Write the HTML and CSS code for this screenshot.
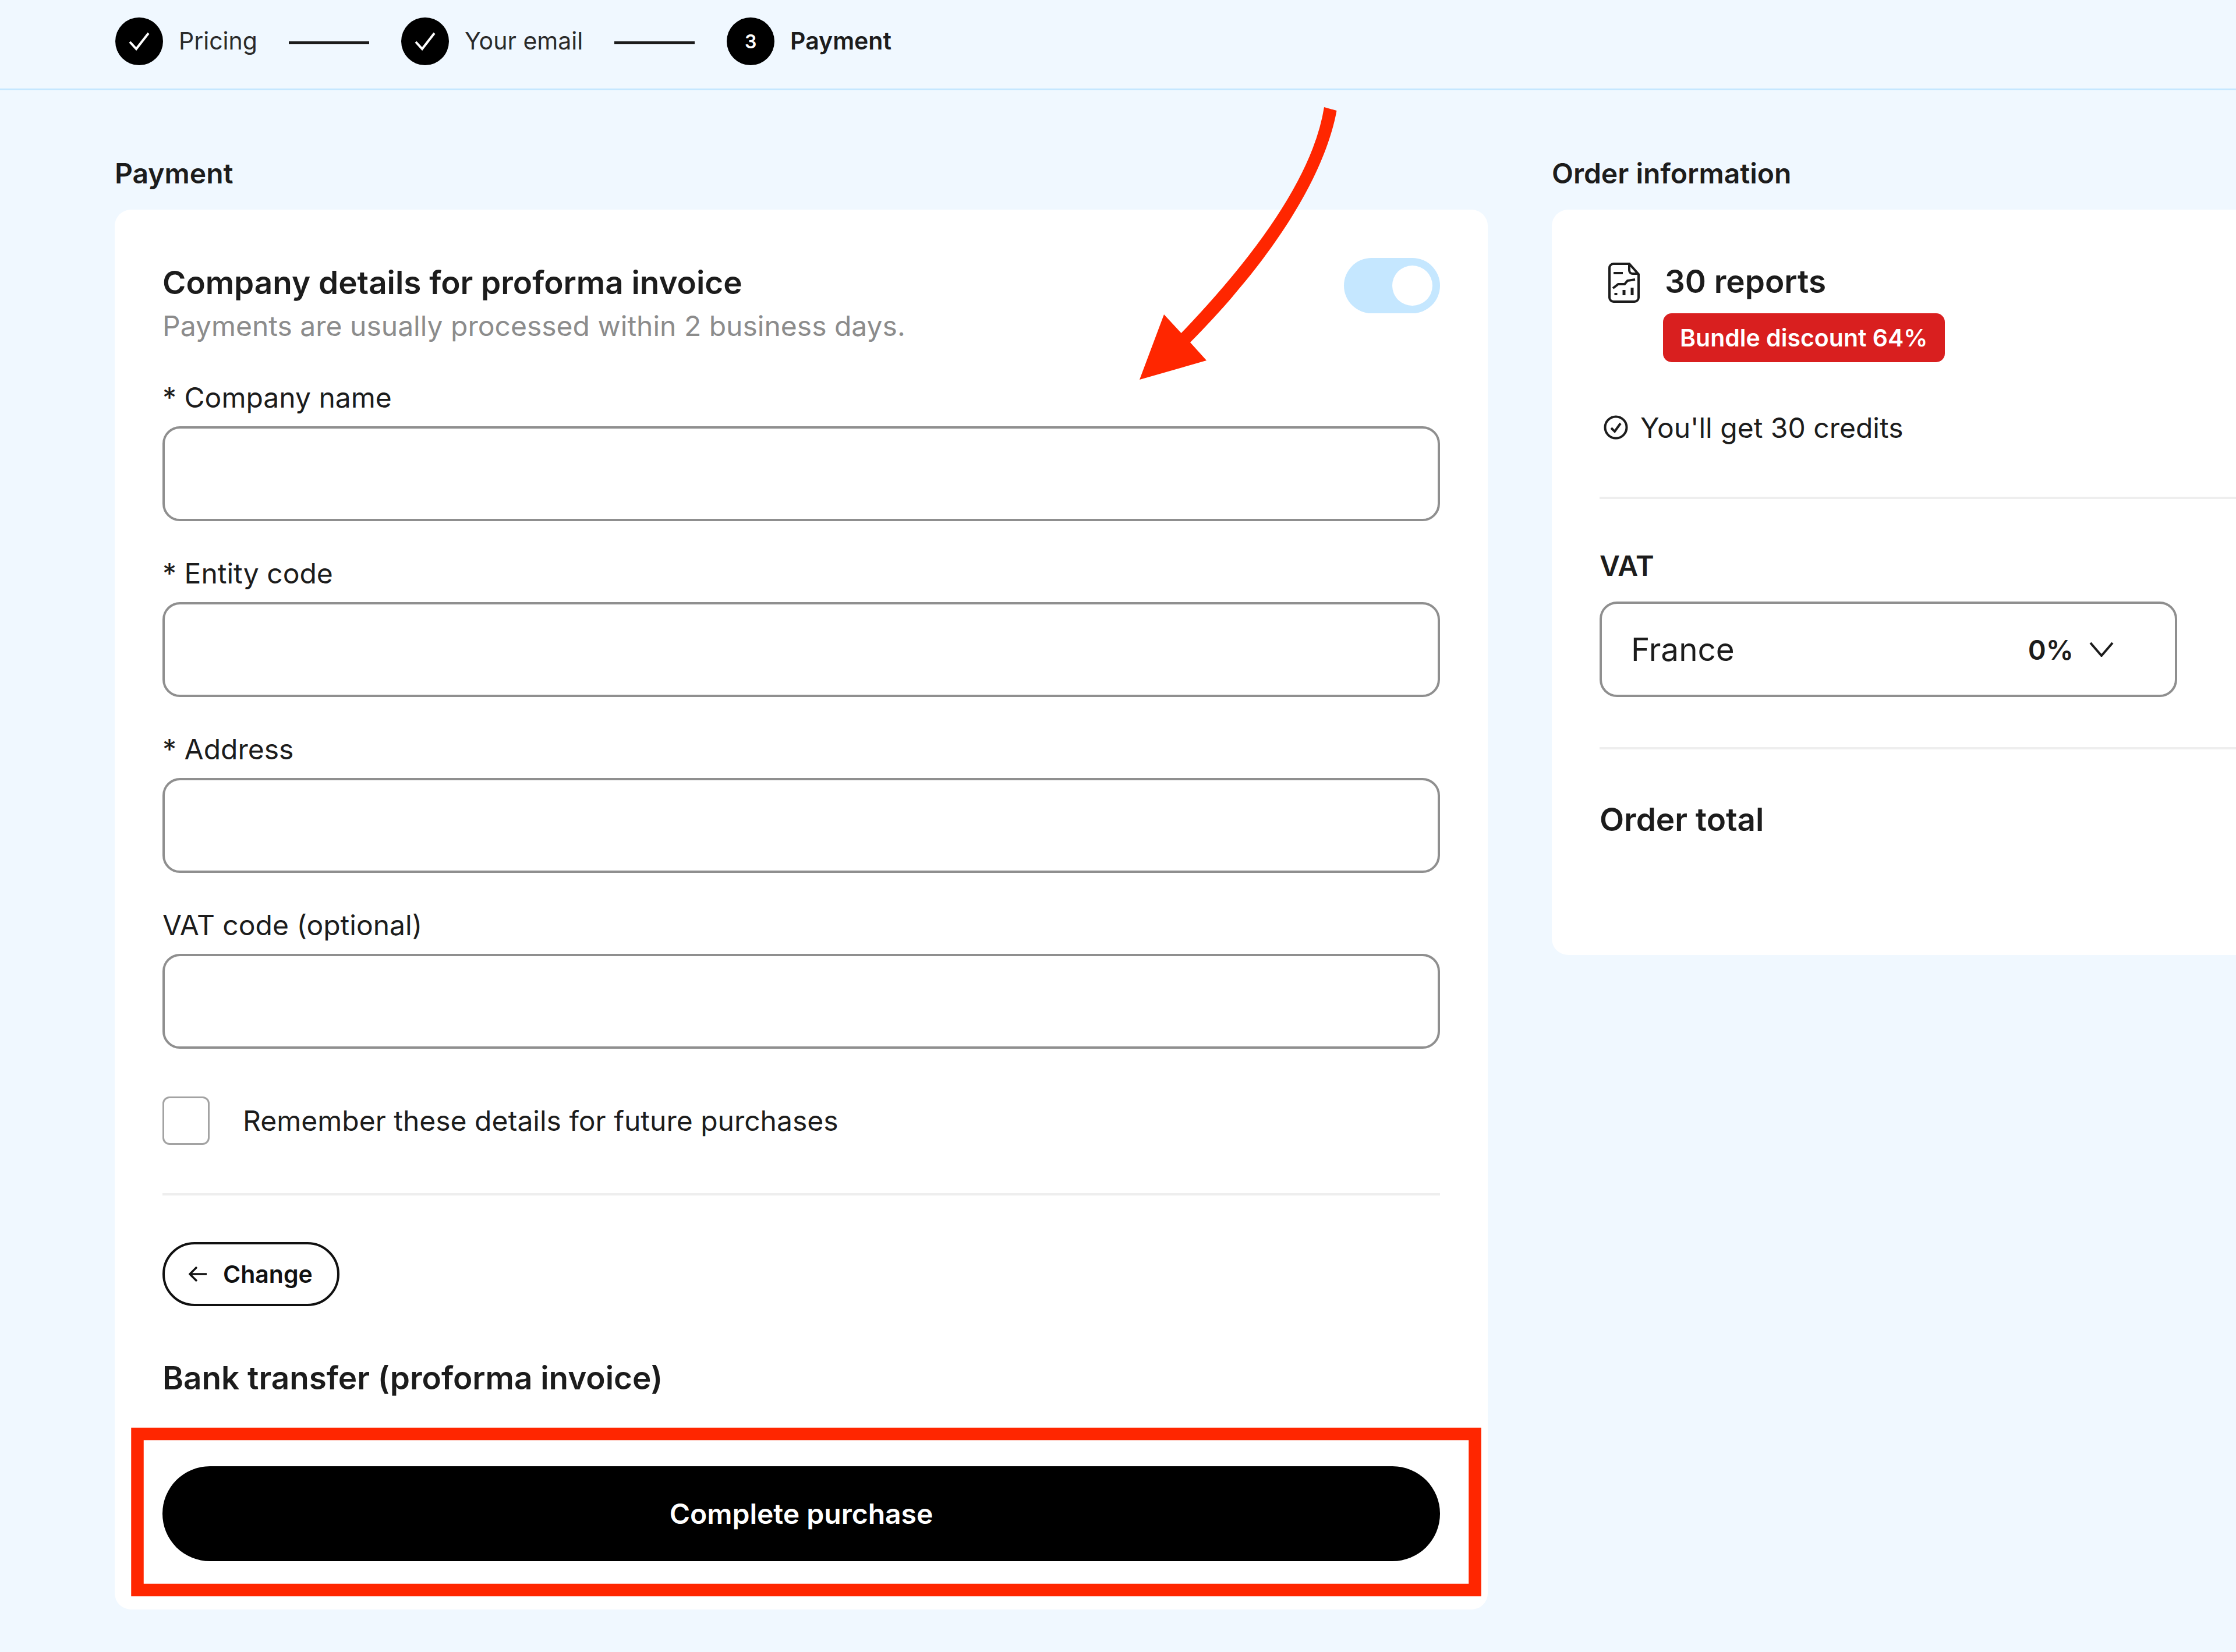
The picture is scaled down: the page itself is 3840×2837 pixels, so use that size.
FILE: index.html
```html
<!DOCTYPE html>
<html lang="en">
<head>
    <meta charset="UTF-8">
    <title>Payment</title>
    <link rel="stylesheet" href="styles.css">
</head>
<body>
    <header class="steps">
        <div class="step">
            <span class="step-dot">
                <svg class="step-check" viewBox="0 0 36 32"><path d="M2 17 L13 29 L34 2"/></svg>
            </span>
            <span class="step-label">Pricing</span>
        </div>
        <span class="step-line"></span>
        <div class="step">
            <span class="step-dot">
                <svg class="step-check" viewBox="0 0 36 32"><path d="M2 17 L13 29 L34 2"/></svg>
            </span>
            <span class="step-label">Your email</span>
        </div>
        <span class="step-line"></span>
        <div class="step">
            <span class="step-dot">3</span>
            <span class="step-label step-current">Payment</span>
        </div>
    </header>

    <main class="layout">
        <section class="col-payment">
            <h2 class="col-title">Payment</h2>
            <div class="card card-payment">
                <div class="card-head">
                    <div class="head-text">
                        <h3 class="heading">Company details for proforma invoice</h3>
                        <p class="hint">Payments are usually processed within 2 business days.</p>
                    </div>
                    <span class="toggle"><span class="toggle-knob"></span></span>
                </div>

                <div class="field">
                    <label class="field-label" for="company">* Company name</label>
                    <input class="input" type="text" id="company">
                </div>
                <div class="field">
                    <label class="field-label" for="entity">* Entity code</label>
                    <input class="input" type="text" id="entity">
                </div>
                <div class="field">
                    <label class="field-label" for="address">* Address</label>
                    <input class="input" type="text" id="address">
                </div>
                <div class="field">
                    <label class="field-label" for="vat">VAT code (optional)</label>
                    <input class="input" type="text" id="vat">
                </div>

                <label class="remember">
                    <input class="checkbox" type="checkbox">
                    <span>Remember these details for future purchases</span>
                </label>

                <hr class="divider divider-form">

                <button class="btn-change" type="button">
                    <svg class="btn-arrow" viewBox="0 0 32 28"><path d="M31 14 H3 M14 2 L2 14 L14 26"/></svg>
                    Change
                </button>

                <h3 class="heading heading-bank">Bank transfer (proforma invoice)</h3>

                <button class="btn-complete" type="button">Complete purchase</button>
            </div>
        </section>

        <aside class="col-order">
            <h2 class="col-title">Order information</h2>
            <div class="card card-order">
                <div class="product">
                    <svg class="report-icon" viewBox="0 0 54 69">
                        <path d="M2 9 a7 7 0 0 1 7-7 H36 L52 20 V60 a7 7 0 0 1-7 7 H9 a7 7 0 0 1-7-7 Z"/>
                        <path d="M36 2 V13 a6 6 0 0 0 6 6 H52"/>
                        <path d="M9 18 H25"/>
                        <path d="M8 44 L17 37 H28 L33 31 L46 29"/>
                        <path class="report-bars" d="M13 52 V56 M27 47 V56 M41 43 V56"/>
                    </svg>
                    <div>
                        <div class="product-name">30 reports</div>
                        <span class="badge">Bundle discount 64%</span>
                    </div>
                </div>
                <div class="credits">
                    <svg class="credits-icon" viewBox="0 0 42 42">
                        <circle cx="21" cy="21" r="18.5"/>
                        <path d="M13 22 L19 28 L29 14"/>
                    </svg>
                    You'll get 30 credits
                </div>

                <hr class="divider divider-credits">

                <h3 class="vat-title">VAT</h3>
                <div class="select">
                    <span>France</span>
                    <span class="select-rate">0%</span>
                    <svg class="chevron" viewBox="0 0 42 26"><path d="M2 2 L21 24 L40 2"/></svg>
                </div>

                <hr class="divider divider-vat">

                <h3 class="heading heading-total">Order total</h3>
            </div>
        </aside>
    </main>

    <!-- annotations drawn over the screenshot -->
    <svg class="marks" viewBox="0 0 3840 2837">
        <path d="M2274 184 Q2249 342 2028.6 572 L1999 540 L1957 652 L2072 619 L2044 588 C2230 400 2283 260 2295.5 190 Z"/>
        <rect class="mark-box" x="236" y="2462.5" width="2297" height="268"/>
    </svg>
</body>
</html>
```

FILE: styles.css
```css
* {
    box-sizing: border-box;
}

body {
    margin: 0;
    height: 2837px;
    overflow: hidden;
    position: relative;
    background: #f0f8ff;
    color: #1c1c1c;
    font-family: Inter, "Noto Sans", sans-serif;
}

h2, h3, p {
    margin: 0;
}

/* steps bar */
.steps {
    display: flex;
    align-items: center;
    height: 155px;
    padding: 0 0 10px 198px;
    border-bottom: 3px solid #c5e7ff;
}

.step {
    display: flex;
    align-items: center;
    gap: 27px;
}

.step-dot {
    display: flex;
    align-items: center;
    justify-content: center;
    width: 82px;
    height: 82px;
    border-radius: 50%;
    background: #000;
    color: #fff;
    font-size: 32px;
    font-weight: 600;
}

.step-check {
    width: 36px;
    height: 32px;
    fill: none;
    stroke: #fff;
    stroke-width: 4;
}

.step-label {
    margin-bottom: 2px;
    font-size: 41px;
    color: #2a2a2a;
}

.step-current {
    font-weight: 600;
    color: #1c1c1c;
}

.step-line {
    width: 138px;
    height: 5px;
    margin: 4px 55px 0 54px;
    background: #1c1c1c;
}

/* columns */
.layout {
    display: flex;
    align-items: flex-start;
    gap: 110px;
    padding: 113px 0 0 197px;
}

.col-payment {
    flex: 0 0 2358px;
}

.col-order {
    flex: 0 0 1400px;
}

.col-title {
    height: 60px;
    margin-bottom: 32px;
    font-size: 48px;
    font-weight: 600;
    line-height: 60px;
}

.card {
    background: #fff;
    border-radius: 28px;
}

.card-payment {
    padding: 83px 82px;
}

.card-order {
    padding: 91px 0 201px 82px;
}

.card-head {
    display: flex;
    justify-content: space-between;
    align-items: flex-start;
}

.head-text {
    padding-top: 10px;
}

.heading {
    font-size: 54.8px;
    font-weight: 600;
    line-height: 64px;
}

.hint {
    margin-top: 15px;
    font-size: 48px;
    line-height: 56px;
    color: #8c8c8c;
}

.toggle {
    display: flex;
    justify-content: flex-end;
    align-items: center;
    width: 165px;
    height: 95px;
    padding-right: 13px;
    border-radius: 48px;
    background: #c5e7ff;
}

.toggle-knob {
    width: 69px;
    height: 69px;
    border-radius: 50%;
    background: #fff;
}

/* form */
.field {
    margin-top: 62px;
}

.card-head + .field {
    margin-top: 67px;
}

.field-label {
    display: block;
    margin-bottom: 21px;
    font-size: 48px;
    line-height: 56px;
}

.input {
    display: block;
    width: 100%;
    height: 163px;
    border: 4px solid #8f8f8f;
    border-radius: 30px;
    background: #fff;
}

.remember {
    display: flex;
    align-items: center;
    gap: 57px;
    margin-top: 82px;
    font-size: 48px;
}

.checkbox {
    appearance: none;
    width: 81px;
    height: 83px;
    margin: 0;
    border: 3px solid #a3a3a3;
    border-radius: 12px;
}

.divider {
    height: 4px;
    margin: 0;
    border: 0;
    background: #eeeeee;
}

.divider-form {
    margin-top: 83px;
}

.btn-change {
    display: flex;
    align-items: center;
    gap: 27px;
    height: 110px;
    width: 304px;
    margin-top: 80px;
    padding: 0 0 0 41px;
    border: 4px solid #111;
    border-radius: 55px;
    background: #fff;
    color: #111;
    font-family: inherit;
    font-size: 41px;
    font-weight: 600;
}

.btn-arrow {
    width: 32px;
    height: 28px;
    fill: none;
    stroke: #111;
    stroke-width: 3.5;
}

.heading-bank {
    margin-top: 91px;
}

.btn-complete {
    display: block;
    width: 100%;
    height: 163px;
    margin-top: 120px;
    border: 0;
    border-radius: 82px;
    background: #000;
    color: #fff;
    font-family: inherit;
    font-size: 48px;
    font-weight: 600;
}

/* order */
.product {
    display: flex;
    align-items: flex-start;
    gap: 43px;
    padding-left: 15px;
}

.report-icon {
    width: 54px;
    height: 69px;
    fill: none;
    stroke: #1c1c1c;
    stroke-width: 4;
}

.report-bars {
    stroke-width: 5;
}

.product-name {
    font-size: 54.8px;
    font-weight: 600;
    line-height: 64px;
}

.badge {
    display: inline-block;
    height: 84px;
    margin-top: 23px;
    margin-left: -3px;
    padding: 0 29px;
    border-radius: 15px;
    background: #d91f1f;
    color: #fff;
    font-size: 41px;
    font-weight: 600;
    line-height: 84px;
}

.credits {
    display: flex;
    align-items: center;
    gap: 21px;
    height: 56px;
    margin-top: 84px;
    padding-left: 7px;
    font-size: 48px;
}

.credits-icon {
    width: 42px;
    height: 42px;
    fill: none;
    stroke: #1c1c1c;
    stroke-width: 4;
}

.divider-credits {
    margin-top: 91px;
}

.vat-title {
    margin-top: 85px;
    font-size: 48px;
    font-weight: 600;
    line-height: 60px;
}

.select {
    display: flex;
    align-items: center;
    width: 992px;
    height: 164px;
    margin-top: 31px;
    padding: 0 105px 0 50px;
    border: 4px solid #8f8f8f;
    border-radius: 30px;
    font-size: 54.8px;
}

.select-rate {
    margin-left: auto;
    margin-right: 27px;
    font-size: 47px;
    font-weight: 600;
}

.chevron {
    width: 42px;
    height: 26px;
    fill: none;
    stroke: #1c1c1c;
    stroke-width: 4;
}

.divider-vat {
    margin-top: 86px;
}

.heading-total {
    margin-top: 88px;
}

/* red arrow and box */
.marks {
    position: absolute;
    left: 0;
    top: 0;
    width: 3840px;
    height: 2837px;
    fill: #ff2600;
    pointer-events: none;
}

.mark-box {
    fill: none;
    stroke: #ff2600;
    stroke-width: 21.5;
}
```
